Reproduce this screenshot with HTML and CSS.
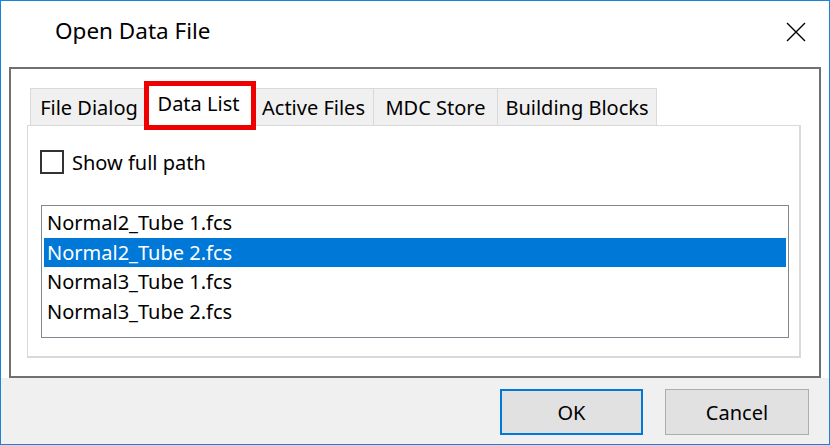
FILE: index.html
```html
<!DOCTYPE html>
<html>
<head>
<meta charset="utf-8">
<link rel="stylesheet" href="styles.css">
</head>
<body>
<div class="window">
  <div class="titlebar">
    <span class="title">Open Data File</span>
    <svg class="close" width="20" height="20" viewBox="0 0 20 20"><path d="M1 1 L19 19 M19 1 L1 19" stroke="#000" stroke-width="1.4" fill="none"/></svg>
  </div>
  <div class="body">
    <div class="group">
      <div class="tabs">
        <div class="tab tab-file">File Dialog</div>
        <div class="tab tab-data selected">Data List</div>
        <div class="tab tab-active">Active Files</div>
        <div class="tab tab-mdc">MDC Store</div>
        <div class="tab tab-blocks">Building Blocks</div>
      </div>
      <div class="panel">
        <label class="check"><span class="box"></span><span>Show full path</span></label>
        <ul class="list">
          <li>Normal2_Tube 1.fcs</li>
          <li class="sel">Normal2_Tube 2.fcs</li>
          <li>Normal3_Tube 1.fcs</li>
          <li>Normal3_Tube 2.fcs</li>
        </ul>
      </div>
    </div>
  </div>
  <div class="footer">
    <button class="btn default">OK</button>
    <button class="btn">Cancel</button>
  </div>
</div>
</body>
</html>
```
FILE: styles.css
```css
* { box-sizing: border-box; }
html, body { margin: 0; padding: 0; background: #fff; }
body { font-family: "Noto Sans", "Open Sans", sans-serif; font-size: 20px; color: #000; }
.window {
  width: 830px; height: 445px;
  border: 1px solid #1883d7;
  background: #fff;
  display: flex; flex-direction: column;
}
.titlebar {
  height: 66px; flex: none;
  display: flex; align-items: center; justify-content: space-between;
  padding: 0 23px 7px 54px;
}
.title { font-size: 22.5px; }
.close { display: block; margin-top: 3px; }
.body { padding: 0 8px; flex: none; }
.group {
  height: 311px;
  border: 2px solid #707070;
  padding: 19px 18px 18px 16px;
  display: flex; flex-direction: column;
}
.tabs {
  height: 37px; flex: none;
  display: flex; align-items: flex-end;
  margin-left: 3px;
  position: relative; z-index: 1;
}
.tab {
  height: 37px;
  padding: 0;
  border: 1px solid #d9d9d9; border-bottom: none;
  background: #f0f0f0;
  margin-right: -1px;
  display: flex; align-items: center; justify-content: center;
  white-space: nowrap;
}
.tab-file { width: 118px; }
.tab-data { width: 110px; }
.tab-active { width: 121px; }
.tab-mdc { width: 125px; }
.tab-blocks { width: 160px; }
.tab.selected {
  position: relative;
  height: 42px; margin-bottom: -1px;
  margin-left: -2px; margin-right: -2px;
  padding: 0 3px 4px 0;
  background: #fff;
  z-index: 2;
}
.tab.selected::after {
  content: ""; position: absolute;
  left: -2px; right: -2px; top: -4px; bottom: -4px;
  border: 5px solid #ee0000;
}
.panel {
  flex: 1;
  border: 1px solid #d9d9d9;
  border-right-width: 2px; border-bottom-width: 2px;
  background: #fff;
  padding: 24px 10px 0 12px;
}
.check { display: flex; align-items: center; gap: 8px; height: 24px; }
.box { width: 24px; height: 24px; border: 2px solid #333; background: #fff; }
.list {
  list-style: none; margin: 31px 0 0 1px; padding: 2px 2px 0 2px;
  height: 133px;
  border: 1px solid #828790;
}
.list li { height: 29.5px; line-height: 29.5px; padding-left: 3px; white-space: nowrap; }
.list li.sel { background: #0078d7; color: #fff; }
.footer {
  flex: 1;
  background: #f0f0f0;
  display: flex; justify-content: flex-end; align-items: flex-start;
  gap: 22px;
  padding: 11px 20px 0 0;
}
.btn {
  font-family: inherit; font-size: 20px; color: #000;
  width: 144px; height: 46px;
  background: #e1e1e1;
  border: 1px solid #adadad;
  padding: 0;
}
.btn.default { width: 143px; border: 2px solid #0078d7; }
```
